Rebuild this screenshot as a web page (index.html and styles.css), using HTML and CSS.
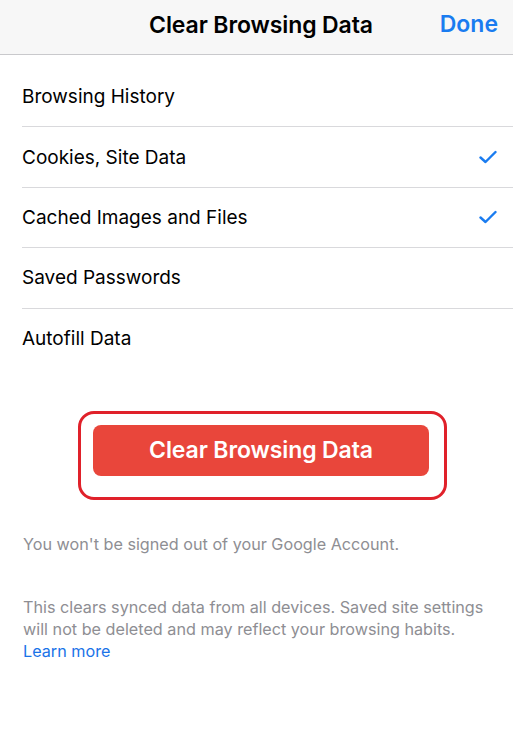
FILE: index.html
```html
<!DOCTYPE html>
<html>
<head>
<meta charset="utf-8">
<link rel="stylesheet" href="styles.css">
</head>
<body>
<div class="screen">
  <header class="navbar">
    <div class="nav-title">Clear Browsing Data</div>
    <div class="nav-done">Done</div>
  </header>
  <ul class="list">
    <li class="row"><span>Browsing History</span></li>
    <li class="row"><span>Cookies, Site Data</span>
      <svg class="check" viewBox="0 0 18 14" width="18" height="14"><path d="M1.5 7.5 L6.5 12 L16.5 2" fill="none" stroke="#1a7cf0" stroke-width="2.4" stroke-linecap="round" stroke-linejoin="round"/></svg></li>
    <li class="row"><span>Cached Images and Files</span>
      <svg class="check" viewBox="0 0 18 14" width="18" height="14"><path d="M1.5 7.5 L6.5 12 L16.5 2" fill="none" stroke="#1a7cf0" stroke-width="2.4" stroke-linecap="round" stroke-linejoin="round"/></svg></li>
    <li class="row"><span>Saved Passwords</span></li>
    <li class="row last"><span>Autofill Data</span></li>
  </ul>
  <div class="button-area">
    <div class="highlight">
      <button class="clear-btn">Clear Browsing Data</button>
    </div>
  </div>
  <p class="note first">You won't be signed out of your Google Account.</p>
  <p class="note">This clears synced data from all devices. Saved site settings will not be deleted and may reflect your browsing habits.<br><a class="link">Learn more</a></p>
</div>
</body>
</html>
```
FILE: styles.css
```css
* { box-sizing: border-box; }
html, body { margin: 0; padding: 0; background: #fff; }
body { font-family: Inter, "Noto Sans", sans-serif; color: #000; }
.screen { width: 513px; }
.navbar {
  height: 55px;
  background: #f7f7f7;
  border-bottom: 1px solid #c9c9cc;
  display: flex;
  align-items: center;
  justify-content: center;
  position: relative;
  padding-bottom: 4px;
}
.nav-title { font-size: 23px; font-weight: 600; letter-spacing: -0.1px; margin-left: 9px; }
.nav-done { position: absolute; right: 15px; top: 10px; font-size: 23px; font-weight: 600; color: #1a7cf0; }
.list { list-style: none; margin: 12px 0 0 0; padding: 0 0 0 22px; }
.row {
  height: 60.4px;
  display: flex;
  align-items: center;
  justify-content: space-between;
  border-bottom: 1px solid #d9d9dc;
  font-size: 19px;
  padding-right: 16px;
}
.row.last { border-bottom: none; }
.check { display: block; }
.button-area { display: flex; justify-content: center; padding: 42px 0 0 0; margin-left: 12px; }
.highlight {
  width: 369px;
  height: 89px;
  border: 3px solid #e0212a;
  border-radius: 16px;
  padding: 11px 0 0 12px;
}
.clear-btn {
  width: 336px;
  height: 51px;
  border: none;
  border-radius: 8px;
  background: #e9463b;
  color: #fff;
  font-family: Inter, "Noto Sans", sans-serif;
  font-size: 23px;
  font-weight: 600;
  letter-spacing: -0.1px;
  display: block;
}
.note { margin: 0; padding: 0 0 0 23px; font-size: 16.2px; color: #8e8e93; line-height: 22px; width: 505px; }
.note.first { margin-top: 33px; margin-bottom: 41px; }
.link { color: #1a73e8; text-decoration: none; }
```
